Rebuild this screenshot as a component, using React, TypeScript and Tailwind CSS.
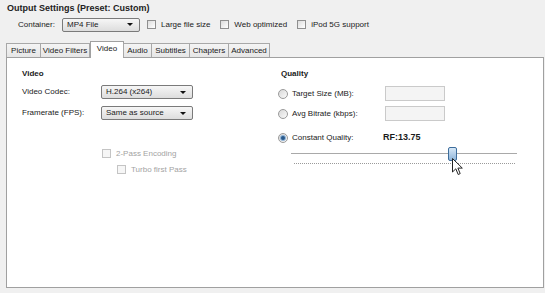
import React from 'react'

const font = "font-['Liberation_Sans',Arial,sans-serif]"

const Select: React.FC<{ value: string; w: string }> = ({ value, w }) => (
  <div className={`${w} h-[14px] border border-[#7a7a7a] rounded-[2px] bg-gradient-to-b from-[#f6f6f6] to-[#dddddd] flex items-center justify-between pl-[4px] pr-[6px]`}>
    <span className="text-[8px] leading-none text-[#1a1a1a]">{value}</span>
    <span className="w-0 h-0 border-l-[3px] border-r-[3px] border-t-[3px] border-l-transparent border-r-transparent border-t-[#111]" />
  </div>
)

const Check: React.FC<{ label: string; disabled?: boolean }> = ({ label, disabled }) => (
  <div className="flex items-center gap-[5px]">
    <span
      className={
        disabled
          ? 'w-[9px] h-[9px] border border-[#c4c4c4] bg-[#f6f6f6]'
          : 'w-[9px] h-[9px] border border-[#8f8f8f] bg-gradient-to-br from-[#dcdcdc] to-[#ffffff]'
      }
    />
    <span className={`text-[8px] leading-none ${disabled ? 'text-[#a3a3a3]' : 'text-[#1a1a1a]'}`}>{label}</span>
  </div>
)

const Radio: React.FC<{ checked?: boolean }> = ({ checked }) => (
  <span className="w-[10px] h-[10px] rounded-full border border-[#9a9a9a] bg-gradient-to-br from-[#d8d8d8] to-[#fbfbfb] flex items-center justify-center">
    {checked && <span className="w-[4px] h-[4px] rounded-full bg-[#2a5a8c] ring-1 ring-[#8fb3d6]" />}
  </span>
)

const tabs: { label: string; w: string; active?: boolean }[] = [
  { label: 'Picture', w: 'w-[35px]' },
  { label: 'Video Filters', w: 'w-[50px]' },
  { label: 'Video', w: 'w-[34px]', active: true },
  { label: 'Audio', w: 'w-[29px]' },
  { label: 'Subtitles', w: 'w-[39px]' },
  { label: 'Chapters', w: 'w-[40px]' },
  { label: 'Advanced', w: 'w-[42px]' },
]

const App: React.FC = () => {
  return (
    <div className={`w-[549px] h-[293px] bg-[#f0f0f0] flex overflow-hidden ${font}`}>
      <div className="w-[545px] flex flex-col">
        {/* title */}
        <div className="mt-[2px] h-[12px] pl-[7px] text-[9px] leading-[12px] font-bold text-[#222]">
          Output Settings (Preset: Custom)
        </div>

        {/* container row */}
        <div className="mt-[3px] h-[15px] flex items-center pl-[18px]">
          <span className="w-[44px] text-[8px] leading-none text-[#1a1a1a]">Container:</span>
          <Select value="MP4 File" w="w-[78px]" />
          <div className="ml-[7px]">
            <Check label="Large file size" />
          </div>
          <div className="ml-[10px]">
            <Check label="Web optimized" />
          </div>
          <div className="ml-[10px]">
            <Check label="iPod 5G support" />
          </div>
        </div>

        {/* tabs */}
        <div className="mt-[9px] h-[16px] flex items-end pl-[6px] relative z-10">
          {tabs.map((t) =>
            t.active ? (
              <div
                key={t.label}
                className={`${t.w} h-[17px] -mb-px bg-white border border-b-0 border-[#a0a0a0] flex items-center justify-center text-[8px] leading-none text-[#1a1a1a] pb-[2px]`}
              >
                {t.label}
              </div>
            ) : (
              <div
                key={t.label}
                className={`${t.w} h-[14px] -ml-px first:ml-0 bg-gradient-to-b from-[#f4f4f4] to-[#e6e6e6] border border-b-0 border-[#a8a8a8] flex items-center justify-center text-[8px] leading-none text-[#1a1a1a]`}
              >
                {t.label}
              </div>
            )
          )}
        </div>

        {/* panel */}
        <div className="ml-[6px] w-[538px] h-[231px] bg-white border border-[#a0a0a0] flex">
          {/* left column */}
          <div className="w-[271px] pl-[15px] pt-[10px] flex flex-col">
            <div className="h-[11px] text-[8px] leading-[11px] font-bold text-[#1a1a1a]">Video</div>
            <div className="mt-[6px] h-[14px] flex items-center">
              <span className="w-[79px] text-[8px] leading-none text-[#1a1a1a]">Video Codec:</span>
              <Select value="H.264 (x264)" w="w-[92px]" />
            </div>
            <div className="mt-[7px] h-[14px] flex items-center">
              <span className="w-[79px] text-[8px] leading-none text-[#1a1a1a]">Framerate (FPS):</span>
              <Select value="Same as source" w="w-[92px]" />
            </div>
            <div className="mt-[29px] pl-[80px]">
              <Check label="2-Pass Encoding" disabled />
            </div>
            <div className="mt-[7px] pl-[95px]">
              <Check label="Turbo first Pass" disabled />
            </div>
          </div>

          {/* right column */}
          <div className="flex-1 pt-[10px] flex flex-col">
            <div className="pl-[3px] h-[11px] text-[8px] leading-[11px] font-bold text-[#1a1a1a]">Quality</div>
            <div className="mt-[7px] h-[15px] flex items-center">
              <Radio />
              <span className="ml-[4px] w-[93px] text-[8px] leading-none text-[#1a1a1a]">Target Size (MB):</span>
              <span className="w-[60px] h-[15px] border border-[#cacaca] bg-[#f4f4f4]" />
            </div>
            <div className="mt-[5px] h-[15px] flex items-center">
              <Radio />
              <span className="ml-[4px] w-[93px] text-[8px] leading-none text-[#1a1a1a]">Avg Bitrate (kbps):</span>
              <span className="w-[60px] h-[15px] border border-[#cacaca] bg-[#f4f4f4]" />
            </div>
            <div className="mt-[9px] h-[15px] flex items-center">
              <Radio checked />
              <span className="ml-[4px] w-[91px] text-[8px] leading-none text-[#1a1a1a]">Constant Quality:</span>
              <span className="text-[9px] leading-none font-bold text-[#1a1a1a]">RF:13.75</span>
            </div>

            {/* slider */}
            <div className="mt-[2px] ml-[13px] w-[226px] h-[20px] relative">
              <div className="absolute left-0 right-0 top-[6px] h-[2px] border-t border-[#a9a9a9] border-b border-b-white bg-[#d6d6d6]" />
              <div className="absolute left-[3px] right-[2px] top-[16px] border-t border-dotted border-[#9a9a9a]" />
              <div className="absolute left-[157px] top-0 w-[9px] h-[14px] rounded-[2px] border border-[#3d6d9c] bg-gradient-to-b from-[#d7e8f7] to-[#8fb5da]" />
              <svg className="absolute left-[161px] top-[11px]" width="12" height="18" viewBox="0 0 12 18">
                <path
                  d="M0.5 0.5 L0.5 14 L3.8 10.8 L6.2 16.5 L8.2 15.6 L5.9 10.1 L10.3 10.1 Z"
                  fill="#fff"
                  stroke="#222"
                  strokeWidth="1"
                  strokeLinejoin="round"
                />
              </svg>
            </div>
          </div>
        </div>
      </div>
      <div className="flex-1 bg-white" />
    </div>
  )
}

export default App
